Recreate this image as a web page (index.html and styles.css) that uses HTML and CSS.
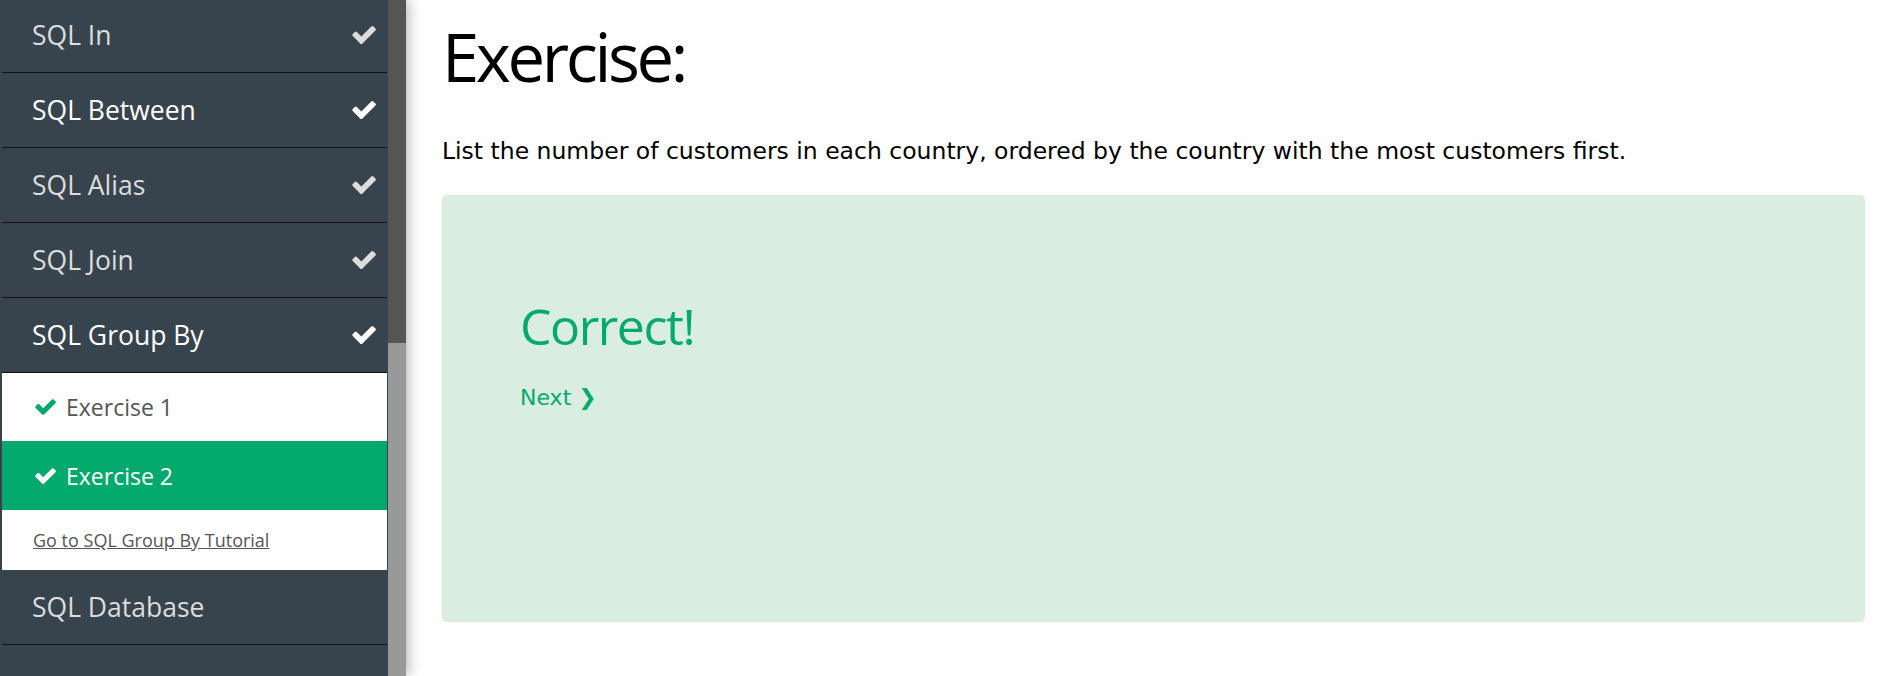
FILE: index.html
```html
<!DOCTYPE html>
<html lang="en">
<head>
<meta charset="utf-8">
<title>SQL Group By Exercise</title>
<link rel="stylesheet" href="styles.css">
</head>
<body>
<div class="page">
  <aside class="sidebar">
    <nav class="topics">
      <div class="topic"><span>SQL In</span><svg class="check" viewBox="100 350 1580 1150"><path d="M1671 566q0 40-28 68l-724 724-136 136q-28 28-68 28t-68-28l-136-136-362-362q-28-28-28-68t28-68l136-136q28-28 68-28t68 28l294 295 656-657q28-28 68-28t68 28l136 136q28 28 28 68z"/></svg></div>
      <div class="topic bright"><span>SQL Between</span><svg class="check" viewBox="100 350 1580 1150"><path d="M1671 566q0 40-28 68l-724 724-136 136q-28 28-68 28t-68-28l-136-136-362-362q-28-28-28-68t28-68l136-136q28-28 68-28t68 28l294 295 656-657q28-28 68-28t68 28l136 136q28 28 28 68z"/></svg></div>
      <div class="topic"><span>SQL Alias</span><svg class="check" viewBox="100 350 1580 1150"><path d="M1671 566q0 40-28 68l-724 724-136 136q-28 28-68 28t-68-28l-136-136-362-362q-28-28-28-68t28-68l136-136q28-28 68-28t68 28l294 295 656-657q28-28 68-28t68 28l136 136q28 28 28 68z"/></svg></div>
      <div class="topic"><span>SQL Join</span><svg class="check" viewBox="100 350 1580 1150"><path d="M1671 566q0 40-28 68l-724 724-136 136q-28 28-68 28t-68-28l-136-136-362-362q-28-28-28-68t28-68l136-136q28-28 68-28t68 28l294 295 656-657q28-28 68-28t68 28l136 136q28 28 28 68z"/></svg></div>
      <div class="topic bright"><span>SQL Group By</span><svg class="check" viewBox="100 350 1580 1150"><path d="M1671 566q0 40-28 68l-724 724-136 136q-28 28-68 28t-68-28l-136-136-362-362q-28-28-28-68t28-68l136-136q28-28 68-28t68 28l294 295 656-657q28-28 68-28t68 28l136 136q28 28 28 68z"/></svg></div>
      <div class="panel">
        <a class="ex done" href="#"><svg class="excheck" viewBox="100 350 1580 1150"><path d="M1671 566q0 40-28 68l-724 724-136 136q-28 28-68 28t-68-28l-136-136-362-362q-28-28-28-68t28-68l136-136q28-28 68-28t68 28l294 295 656-657q28-28 68-28t68 28l136 136q28 28 28 68z"/></svg><span>Exercise 1</span></a>
        <a class="ex active" href="#"><svg class="excheck" viewBox="100 350 1580 1150"><path d="M1671 566q0 40-28 68l-724 724-136 136q-28 28-68 28t-68-28l-136-136-362-362q-28-28-28-68t28-68l136-136q28-28 68-28t68 28l294 295 656-657q28-28 68-28t68 28l136 136q28 28 28 68z"/></svg><span>Exercise 2</span></a>
        <div class="tutorial"><a href="#">Go to SQL Group By Tutorial</a></div>
      </div>
      <div class="topic"><span>SQL Database</span></div>
      <div class="topic"><span></span></div>
    </nav>
    <div class="scrollbar"><div class="thumb"></div></div>
  </aside>
  <main class="content">
    <h1 class="title">Exercise:</h1>
    <p class="task">List the number of customers in each country, ordered by the country with the most customers first.</p>
    <section class="result">
      <h2 class="correct">Correct!</h2>
      <a class="next" href="#">Next ❯</a>
    </section>
  </main>
</div>
</body>
</html>
```
FILE: styles.css
```css
html, body {
  margin: 0;
  padding: 0;
  background: #fff;
}

.page {
  display: flex;
  width: 1893px;
  height: 676px;
  overflow: hidden;
}

.sidebar {
  display: flex;
  flex: 0 0 406px;
  height: 676px;
  background: #38444d;
  box-shadow: 3px 0 12px rgba(0, 0, 0, 0.28);
  position: relative;
  z-index: 1;
}

.topics {
  width: 385px;
  padding: 0 1px 0 2px;
  display: flex;
  flex-direction: column;
  margin-top: -2px;
  font-family: "Open Sans", "Noto Sans", sans-serif;
}

.topic {
  flex: 0 0 74px;
  border-bottom: 1px solid #111;
  display: flex;
  align-items: center;
  justify-content: space-between;
  padding: 0 11px 0 30px;
  color: #ddd;
  font-size: 26.5px;
}

.topic.bright {
  color: #fff;
}

.check {
  width: 24px;
  height: 18px;
  fill: currentColor;
}

.panel {
  background: #fff;
  display: flex;
  flex-direction: column;
}

.ex {
  display: flex;
  align-items: center;
  gap: 10px;
  padding-left: 33px;
  text-decoration: none;
  font-size: 23px;
}

.ex.done {
  height: 68px;
  color: #555;
}

.ex.done .excheck {
  fill: #04aa6d;
}

.ex.active {
  height: 69px;
  background: #04aa6d;
  color: #fff;
}

.ex.active .excheck {
  fill: #fff;
}

.excheck {
  width: 21px;
  height: 16px;
}

.tutorial {
  height: 60px;
  display: flex;
  align-items: center;
  padding-left: 31px;
  font-size: 18px;
}

.tutorial a {
  color: #555;
  text-decoration: underline;
}

.scrollbar {
  flex: 0 0 18px;
  background: #999;
  display: flex;
  flex-direction: column;
}

.thumb {
  height: 343px;
  background: #555;
}

.content {
  flex: 1;
  padding: 0 28px 0 36px;
}

.title {
  margin: 16px 0 0;
  font-family: "Open Sans", "Noto Sans", sans-serif;
  font-weight: 400;
  font-size: 67px;
  letter-spacing: -3.4px;
  line-height: 80px;
  color: #000;
}

.task {
  margin: 41px 0 0;
  font-family: "DejaVu Sans", Verdana, sans-serif;
  font-size: 23.5px;
  color: #000;
}

.result {
  margin-top: 30px;
  height: 427px;
  box-sizing: border-box;
  background: #d9ede1;
  border-radius: 5px;
  padding: 101px 78px 0;
}

.correct {
  margin: 0;
  font-family: "Open Sans", "Noto Sans", sans-serif;
  font-weight: 400;
  font-size: 50px;
  letter-spacing: -1.4px;
  line-height: 60px;
  color: #04aa6d;
}

.next {
  display: inline-block;
  margin-top: 29px;
  font-family: "DejaVu Sans", Verdana, sans-serif;
  font-size: 22px;
  color: #04aa6d;
  text-decoration: none;
}
```
